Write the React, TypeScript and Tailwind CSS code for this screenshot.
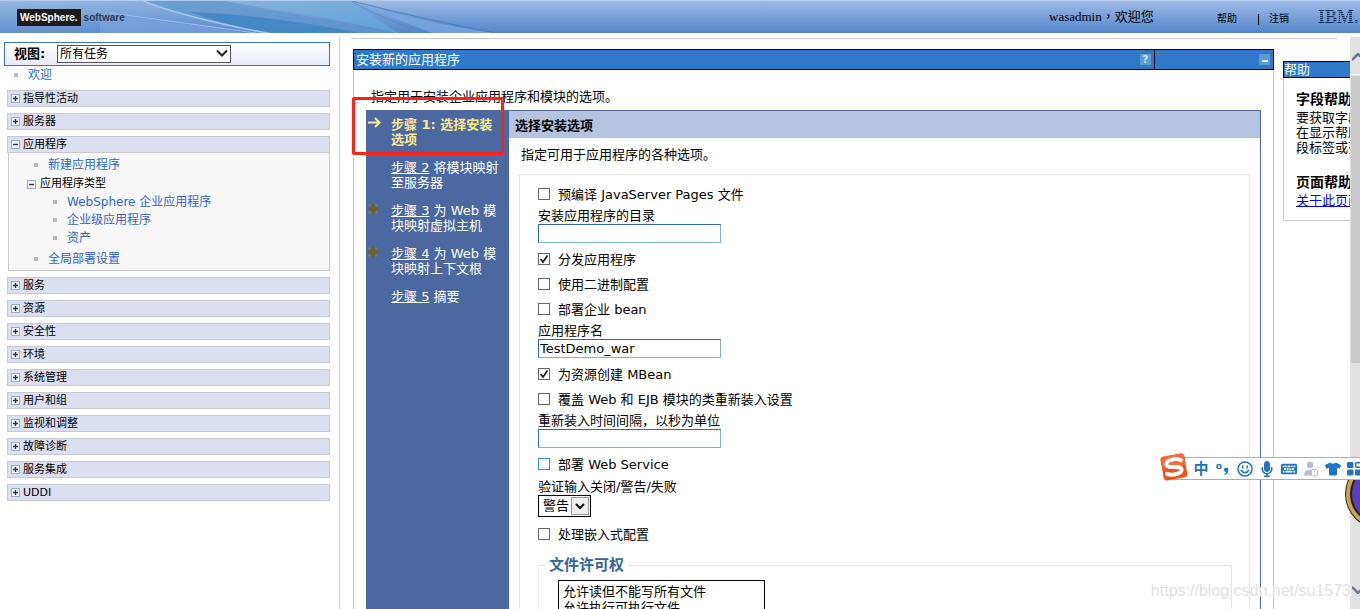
import type { ReactNode } from "react";
import { FaKeyboard, FaMicrophone, FaTshirt } from "react-icons/fa";

const sections = [
  "服务",
  "资源",
  "安全性",
  "环境",
  "系统管理",
  "用户和组",
  "监视和调整",
  "故障诊断",
  "服务集成",
  "UDDI",
];

const Toggle = ({ open }: { open?: boolean }) => (
  <svg viewBox="0 0 9 9" className="size-[9px] shrink-0" aria-hidden="true">
    <rect x="0.5" y="0.5" width="8" height="8" fill="#eef3f7" stroke="#8fb0cc" />
    <path d="M2 4.5h5" stroke="#333" strokeWidth="1.4" />
    {!open && <path d="M4.5 2v5" stroke="#333" strokeWidth="1.4" />}
  </svg>
);

const NavSection = ({ title, open }: { title: string; open?: boolean }) => (
  <button
    type="button"
    className="flex h-[17px] w-full items-center gap-[3px] border border-[#c9c9c9] bg-[#dcdff0] pl-[3px] text-[11px] leading-[15px] text-black"
  >
    <Toggle open={open} />
    {title}
  </button>
);

const NavLink = ({ children }: { children: ReactNode }) => (
  <a href="#" className="flex h-[18px] items-center gap-2.5 text-[12px] leading-[18px] text-[#2f65cc]">
    <span className="size-1 shrink-0 bg-[#b9b9b9]" />
    {children}
  </a>
);

const Header = () => (
  <header className="relative flex h-[33px] shrink-0 items-center overflow-hidden border-t border-[#b4cbea] bg-gradient-to-b from-[#9dbbe5] to-[#5485cd]">
    <svg
      viewBox="0 0 520 33"
      className="absolute top-0 left-0 h-[33px] w-[520px]"
      aria-hidden="true"
    >
      <defs>
        <linearGradient id="wave" x1="0" y1="0" x2="1" y2="1">
          <stop offset="0" stopColor="#8fb4dc" />
          <stop offset="1" stopColor="#4a82cc" />
        </linearGradient>
        <linearGradient id="teal" x1="0" y1="0" x2="1" y2="1">
          <stop offset="0" stopColor="#86b3dc" />
          <stop offset="1" stopColor="#5aa2da" />
        </linearGradient>
      </defs>
      <path d="M0 0H352Q430 18 502 33H0z" fill="url(#wave)" opacity="0.5" />
      <path d="M145 0H225Q320 18 400 33H272Q200 20 145 0z" fill="#5f95cc" opacity="0.7" />
      <path d="M190 11Q270 14 365 33H272Q225 24 190 11z" fill="#3f84c4" opacity="0.8" />
      <path d="M225 0H350L400 33Q310 12 225 0z" fill="url(#teal)" opacity="0.9" />
      <path d="M352 0Q420 22 502 33H435Q390 16 352 0z" fill="#7fa9df" opacity="0.7" />
      <path d="M100 14Q190 22 250 33H100z" fill="#7ea4de" opacity="0.6" />
      <path d="M143 0Q190 18 272 33" stroke="#a6c6ea" strokeWidth="1.6" fill="none" />
      <path d="M110 12Q200 24 262 33" stroke="#9dbfe8" fill="none" />
      <path d="M352 0Q430 20 502 33" stroke="#4d7cba" strokeWidth="0.8" fill="none" />
      <path d="M352 1Q390 22 432 33" stroke="#5383c0" strokeWidth="0.6" fill="none" />
    </svg>
    <div className="relative ml-[17px] flex flex-1 items-center gap-[3px] font-['Liberation_Sans',sans-serif] text-[10px] font-bold">
      <span className="h-[17px] bg-[#1b1b1b] px-[3px] leading-[17px] text-white">WebSphere.</span>
      <span className="leading-[17px] text-[#2d3d5c]">software</span>
    </div>
    <p className="w-[168px] font-['Liberation_Serif','Noto_Sans_CJK_TC',serif] text-[13px] leading-[18px] text-black">
      wasadmin，欢迎您
    </p>
    <div className="mt-1 flex items-center text-[10px] leading-[14px]">
      <a href="#">帮助</a>
      <span className="mr-[10px] ml-[21px] h-[11px] w-px bg-black" />
      <a href="#">注销</a>
    </div>
    <span className="ml-[29px] w-[42px] bg-[repeating-linear-gradient(to_bottom,#1c2f52_0px,#1c2f52_1px,#1c2f5240_1px,#1c2f5240_2px)] bg-clip-text font-['Liberation_Serif',serif] text-[18px] leading-[22px] font-bold text-transparent">
      IBM.
    </span>
  </header>
);

const SideNav = () => (
  <nav className="mt-1 w-[340px] shrink-0 border-r border-[#d0d0d0] pt-[5px] pr-[9px]">
    <div className="ml-1 flex h-6 items-center border border-[#3a76b5] bg-gradient-to-b from-white to-[#e8eaf5] pl-[9px]">
      <label htmlFor="view" className="w-[43px] text-[13px] font-bold">
        视图:
      </label>
      <div className="relative">
        <select
          id="view"
          className="h-[18px] w-[174px] appearance-none border border-[#555] bg-white pl-[2px] text-[12px] leading-4 text-black"
        >
          <option>所有任务</option>
        </select>
        <svg viewBox="0 0 12 8" className="pointer-events-none absolute top-[5px] right-[3px] h-2 w-3">
          <path d="M1 1.5l5 5 5-5" fill="none" stroke="#222" strokeWidth="2" />
        </svg>
      </div>
    </div>
    <div className="pl-[14px]">
      <NavLink>欢迎</NavLink>
    </div>
    <div className="mt-[6px] ml-[7px] flex flex-col gap-[6px]">
      <NavSection title="指导性活动" />
      <NavSection title="服务器" />
      <div>
        <NavSection title="应用程序" open />
        <div className="ml-px border border-t-0 border-[#c9c9c9] bg-[#f7f7f7] pt-[3px] pb-[2px]">
          <div className="pl-[25px]">
            <NavLink>新建应用程序</NavLink>
          </div>
          <div className="mt-px flex h-[18px] items-center gap-1 pl-[18px] text-[11px]">
            <Toggle open />
            应用程序类型
          </div>
          <div className="pl-[44px]">
            <NavLink>WebSphere 企业应用程序</NavLink>
            <NavLink>企业级应用程序</NavLink>
            <NavLink>资产</NavLink>
          </div>
          <div className="mt-[3px] pl-[25px]">
            <NavLink>全局部署设置</NavLink>
          </div>
        </div>
      </div>
      {sections.map((s) => (
        <NavSection key={s} title={s} />
      ))}
    </div>
  </nav>
);

const Star = () => (
  <svg viewBox="0 0 12 12" className="size-3" aria-hidden="true">
    <path d="M6 0l2 4 4 2-4 2-2 4-2-4-4-2 4-2z" fill="#6b6120" />
    <g fill="#8c8138">
      <rect x="1.5" y="1.5" width="2" height="2" />
      <rect x="8.5" y="1.5" width="2" height="2" />
      <rect x="1.5" y="8.5" width="2" height="2" />
      <rect x="8.5" y="8.5" width="2" height="2" />
    </g>
  </svg>
);

const Step = ({ n, first, second, star }: { n: number; first: string; second?: string; star?: boolean }) => (
  <li className="flex whitespace-nowrap">
    <span className="w-[25px] pl-px">{star && <Star />}</span>
    <span>
      <a href="#" className="underline">
        步骤 {n}
      </a>{" "}
      {first}
      {second && <br />}
      {second}
    </span>
  </li>
);

const Check = ({ id, label, checked, focus }: { id: string; label: string; checked?: boolean; focus?: boolean }) => (
  <div className="flex h-[25px] items-center gap-2">
    <span className="relative flex size-3">
      <input
        type="checkbox"
        id={id}
        defaultChecked={checked}
        className={
          focus
            ? "peer size-3 appearance-none border border-[#2a8fcf] bg-white"
            : "peer size-3 appearance-none border border-[#666] bg-white"
        }
      />
      <svg viewBox="0 0 12 12" className="pointer-events-none absolute inset-0 hidden size-3 peer-checked:block">
        <path d="M2.5 6l2.5 3 4.5-6.500" fill="none" stroke="#222" strokeWidth="1.8" />
      </svg>
    </span>
    <label htmlFor={id} className="mt-[2px]">
      {label}
    </label>
  </div>
);

const Field = ({ id, label, value }: { id: string; label: string; value?: string }) => (
  <div className="flex flex-col items-start pt-[2px] pb-[3px]">
    <label htmlFor={id} className="leading-4">
      {label}
    </label>
    <input
      id={id}
      type="text"
      defaultValue={value}
      className="h-[19px] w-[183px] border border-t-[#2f6aa3] border-r-[#84aedb] border-b-[#84aedb] border-l-[#2f6aa3] bg-white px-px text-[13px] leading-[17px]"
    />
  </div>
);

const OptionsForm = () => (
  <form className="mt-[11px] mr-[10px] ml-[10px] border border-[#e4e4e4] pt-[6px] pr-[17px] pl-[18px]">
    <Check id="precompile" label="预编译 JavaServer Pages 文件" />
    <Field id="dir" label="安装应用程序的目录" />
    <Check id="distribute" label="分发应用程序" checked />
    <Check id="binary" label="使用二进制配置" />
    <Check id="deployBean" label="部署企业 bean" />
    <Field id="appName" label="应用程序名" value="TestDemo_war" />
    <Check id="mbean" label="为资源创建 MBean" checked />
    <Check id="reload" label="覆盖 Web 和 EJB 模块的类重新装入设置" />
    <Field id="interval" label="重新装入时间间隔，以秒为单位" />
    <Check id="ws" label="部署 Web Service" focus />
    <div className="flex flex-col items-start pt-[3px] pb-[4px]">
      <label htmlFor="validate" className="leading-4">
        验证输入关闭/警告/失败
      </label>
      <div className="relative">
        <select
          id="validate"
          className="h-[22px] w-[53px] appearance-none border border-black bg-white pl-1 text-[13px] leading-5"
        >
          <option>警告</option>
        </select>
        <span className="pointer-events-none absolute top-[2px] right-[2px] flex h-[18px] w-[18px] items-center justify-center border border-[#999] bg-[#eee]">
          <svg viewBox="0 0 10 7" className="h-[7px] w-[10px]">
            <path d="M1 1l4 4 4-4" fill="none" stroke="#111" strokeWidth="2" />
          </svg>
        </span>
      </div>
    </div>
    <Check id="embedded" label="处理嵌入式配置" />
    <fieldset className="mt-[9px] border border-[#e4e4e4] pb-4 pl-[19px]">
      <legend className="-ml-[13px] px-1 text-[15px] leading-5 font-bold text-[#336699]">文件许可权</legend>
      <select
        multiple
        aria-label="文件许可权"
        className="mt-[5px] block h-[70px] w-[207px] overflow-hidden border border-black bg-white pl-[2px] text-[13px]"
      >
        <option className="h-[15px] px-[2px] py-0 leading-[15px]">允许读但不能写所有文件</option>
        <option className="h-[15px] px-[2px] py-0 leading-[15px]">允许执行可执行文件</option>
        <option className="h-[15px] px-[2px] py-0 leading-[15px]">允许 HTML 和图像文件由所有人读取</option>
      </select>
    </fieldset>
  </form>
);

const Portlet = () => (
  <section className="mt-[10px] ml-[13px] min-w-0 flex-1">
    <div className="flex h-[21px] border border-black bg-[#3178c8]">
      <div className="flex flex-1 items-center justify-between border-r border-black pr-[3px] pl-[2px]">
        <h1 className="text-white">安装新的应用程序</h1>
        <button type="button" className="size-[11px] bg-[#5b9bd0] text-[10px] leading-[11px] font-bold text-[#dbe9f5]">
          ?
        </button>
      </div>
      <div className="flex w-[118px] items-center justify-end pr-[3px]">
        <button type="button" aria-label="最小化" className="flex size-[11px] items-end justify-center bg-[#5b9bd0] pb-[3px]">
          <span className="h-[2px] w-[6px] bg-[#dbe9f5]" />
        </button>
      </div>
    </div>
    <div className="border-x border-[#c8c8c8] pt-[18px] pr-3 pb-6 pl-3">
      <p className="pl-[5px] leading-[18px]">指定用于安装企业应用程序和模块的选项。</p>
      <div className="relative mt-[4px] flex">
        <ol className="flex w-[143px] shrink-0 flex-col gap-[13px] bg-[#4b68a0] pt-[7px] leading-[15px] text-white">
          <li className="flex font-bold whitespace-nowrap text-[#fde98d]">
            <span className="w-[25px] pl-[2px]">
              <svg viewBox="0 0 13 11" className="h-[11px] w-[13px]">
                <path d="M0 5.500h11M7 1l4.500 4.500L7 10" fill="none" stroke="#fde98d" strokeWidth="2" />
              </svg>
            </span>
            <span>
              步骤 1: 选择安装
              <br />
              选项
            </span>
          </li>
          <Step n={2} first="将模块映射" second="至服务器" />
          <Step n={3} first="为 Web 模" second="块映射虚拟主机" star />
          <Step n={4} first="为 Web 模" second="块映射上下文根" star />
          <Step n={5} first="摘要" />
        </ol>
        <div className="min-w-0 flex-1 border-t border-r border-[#4b68a0] pb-4">
          <h2 className="h-[27px] bg-[#b4c4de] pl-[6px] leading-[29px] font-bold">选择安装选项</h2>
          <p className="mt-[9px] pl-3 leading-4">指定可用于应用程序的各种选项。</p>
          <OptionsForm />
        </div>
        {/* highlight around the current step */}
        <div className="absolute -top-[13px] -left-[14px] h-[58px] w-[152px] rounded-xs border-3 border-[#fb2314]" />
      </div>
    </div>
  </section>
);

const HelpPanel = () => (
  <aside className="mt-[22px] w-[67px] shrink-0 overflow-hidden whitespace-nowrap">
    <h2 className="h-[17px] border border-r-0 border-black bg-[#3178c8] leading-[16px] text-white">帮助</h2>
    <div className="border-b border-l border-[#c8c8c8] pt-[12px] pb-[11px] pl-3 leading-[15px]">
      <h3 className="text-[14px] leading-[18px] font-bold">字段帮助</h3>
      <p className="mt-[2px]">
        要获取字段
        <br />
        在显示帮助
        <br />
        段标签或列
      </p>
      <h3 className="mt-[18px] text-[14px] leading-[18px] font-bold">页面帮助</h3>
      <a href="#" className="mt-[2px] block leading-4 text-[#0000ee] underline">
        关于此页面
      </a>
    </div>
  </aside>
);

const ScrollBar = () => (
  <div className="mt-1 flex w-[10px] shrink-0 flex-col bg-[#e1e1e1]">
    <div className="h-[38px] overflow-hidden border-b border-white pt-[16px]">
      <svg viewBox="0 0 15 8" className="ml-[2px] h-2 w-[15px]">
        <path d="M0 7l6-6 6 6" fill="none" stroke="#6a7890" strokeWidth="2.500" />
      </svg>
    </div>
    <div className="mt-px ml-px h-[287px] bg-[#c9c9c9]" />
    <div className="flex flex-1 items-end overflow-hidden pb-[15px]">
      <svg viewBox="0 0 15 8" className="ml-[2px] h-2 w-[15px] shrink-0">
        <path d="M0 1l6 6 6-6" fill="none" stroke="#6a7890" strokeWidth="2.500" />
      </svg>
    </div>
  </div>
);

const ImeBar = () => (
  <div className="absolute top-[457px] right-0 flex h-[23px] w-[200px] items-center text-[#1f74c8]">
    <svg viewBox="0 0 36 60" className="absolute top-[8px] right-0 h-[60px] w-[16px]" preserveAspectRatio="xMinYMid slice">
      <circle cx="36" cy="29" r="35" fill="#2a2018" />
      <circle cx="36" cy="29" r="32" fill="none" stroke="#c8a24e" strokeWidth="4" />
      <circle cx="36" cy="29" r="28" fill="#5a3fc0" />
    </svg>
    <div className="absolute inset-y-0 right-0 left-[12px] border-y border-[#a9adb8] bg-white" />
    <svg viewBox="0 0 28 28" className="relative -mt-1 size-7 shrink-0">
      <g transform="rotate(-10 14 14)">
        <rect x="2" y="2" width="24" height="24" rx="3" fill="#f0501e" />
        <rect x="2" y="2" width="24" height="12" rx="3" fill="#f76a3c" />
        <path
          d="M22 8.500C17 5 7 6 7 10.500c0 4.500 14 2.500 14 7 0 4.500-10 5-15 2"
          fill="none"
          stroke="#fff"
          strokeWidth="4"
          strokeLinecap="round"
        />
      </g>
    </svg>
    <div className="relative flex flex-1 items-center gap-[6px] overflow-hidden pl-[5px]">
      <span className="w-4 shrink-0 text-center text-[15px] leading-5 font-bold">中</span>
      <svg viewBox="0 0 16 16" className="size-4 shrink-0">
        <circle cx="4" cy="5.500" r="2" fill="none" stroke="currentColor" strokeWidth="1.500" />
        <path d="M9 9a2.200 2.200 0 1 1 4.300.5q0 3.500-3.800 4.500l-.3-1q1.800-.6 1.800-1.900A2.100 2.100 0 0 1 9 9z" fill="currentColor" />
      </svg>
      <svg viewBox="0 0 16 16" className="size-4 shrink-0" fill="none" stroke="currentColor" strokeWidth="1.600">
        <circle cx="8" cy="8" r="7" />
        <path d="M5.700 4.500v3M10.300 4.500v3M4 9q4 5.500 8 0" />
      </svg>
      <FaMicrophone className="size-4 shrink-0" />
      <FaKeyboard className="size-4 shrink-0" />
      <svg viewBox="0 0 16 16" className="size-4 shrink-0">
        <circle cx="7" cy="4" r="3.200" fill="#b4bdd2" />
        <path d="M1 14.500q0-6 6-6t6 6z" fill="#b4bdd2" />
        <rect x="8.500" y="8.500" width="6" height="6.500" rx="1" fill="#fff" stroke="#b4bdd2" />
        <path d="M11.500 10v1.200M11.500 12.500v1.200" stroke="#b4bdd2" />
      </svg>
      <FaTshirt className="size-4 shrink-0" />
      <svg viewBox="0 0 16 16" className="size-4 shrink-0" fill="currentColor">
        <rect x="0" y="1" width="6.500" height="6" rx="1" />
        <rect x="0" y="8.500" width="6.500" height="6" rx="1" />
        <rect x="8" y="8.500" width="6.500" height="6" rx="1" />
        <rect x="8.700" y="1.700" width="5.500" height="4.600" rx="1" fill="none" stroke="currentColor" strokeWidth="1.400" />
      </svg>
    </div>
  </div>
);

export default function App() {
  return (
    <div className="relative flex h-screen flex-col overflow-hidden bg-white font-['DejaVu_Sans','Noto_Sans_CJK_SC',sans-serif] text-[13px] text-black">
      <Header />
      <div className="flex min-h-0 flex-1">
        <SideNav />
        <main className="min-w-0 flex-1 overflow-hidden pt-[5px]">
          <hr className="mr-[13px] ml-[11px] border-[#c8c8c8]" />
          <div className="flex items-start gap-[9px]">
            <Portlet />
            <HelpPanel />
          </div>
        </main>
        <ScrollBar />
      </div>
      <ImeBar />
      <p className="absolute right-[9px] bottom-[8px] font-['Liberation_Sans',sans-serif] text-[16px] leading-5 text-[#e2e2e2] [text-shadow:1px_1px_0_#fff]">
        https://blog.csdn.net/su1573
      </p>
    </div>
  );
}
